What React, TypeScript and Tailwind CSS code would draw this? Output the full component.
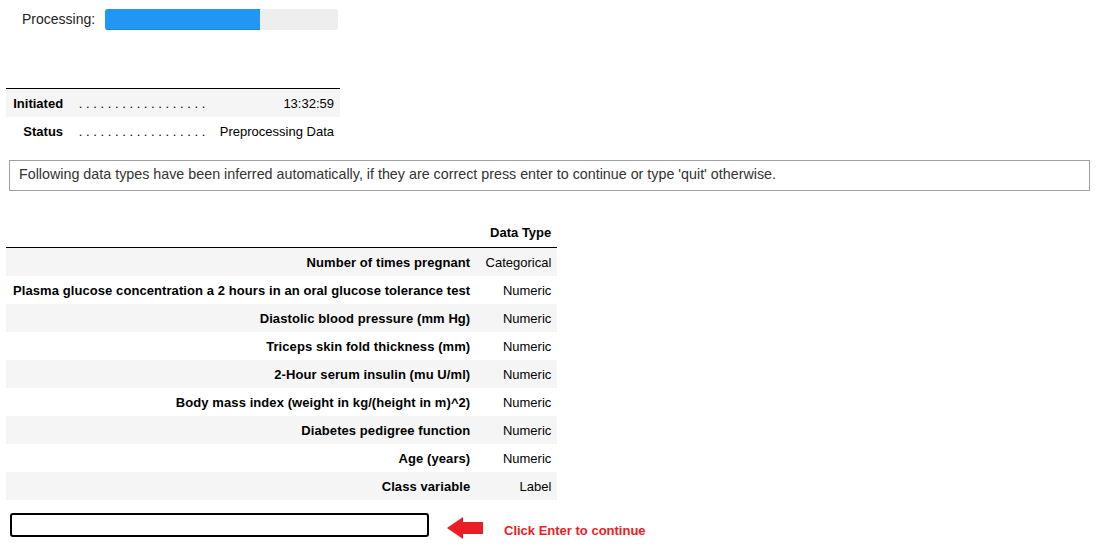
const rows: [string, string][] = [
  ["Number of times pregnant", "Categorical"],
  ["Plasma glucose concentration a 2 hours in an oral glucose tolerance test", "Numeric"],
  ["Diastolic blood pressure (mm Hg)", "Numeric"],
  ["Triceps skin fold thickness (mm)", "Numeric"],
  ["2-Hour serum insulin (mu U/ml)", "Numeric"],
  ["Body mass index (weight in kg/(height in m)^2)", "Numeric"],
  ["Diabetes pedigree function", "Numeric"],
  ["Age (years)", "Numeric"],
  ["Class variable", "Label"],
];

const dots = ". . . . . . . . . . . . . . . . . .";

export default function App() {
  return (
    <div className="min-h-screen bg-white text-black font-['Liberation_Sans',Arial,sans-serif]">
      {/* progress widget */}
      <div className="flex items-center h-[22px] mt-[8px] pl-[22px]">
        <span className="text-[14px] text-[#222] w-[83px]">Processing:</span>
        <div className="w-[233px] h-[21px] bg-[#eeeeee] rounded-[3px] overflow-hidden">
          <div className="h-full w-[155px] bg-[#2196f3] border-b border-[#1e88e5]" />
        </div>
      </div>

      {/* timing table */}
      <table className="ml-[6px] mt-[58px] w-[334px] border-collapse border-t border-black text-[13px]">
        <tbody>
          <tr className="bg-[#f5f5f5] h-[28px]">
            <th className="pl-[6px] pr-[7px] pt-[2px] text-right font-bold">Initiated</th>
            <td className="px-[6px] pt-[2px] text-right">{dots}</td>
            <td className="px-[6px] pt-[2px] text-right">13:32:59</td>
          </tr>
          <tr className="h-[28px]">
            <th className="pl-[6px] pr-[7px] pt-[2px] text-right font-bold">Status</th>
            <td className="px-[6px] pt-[2px] text-right">{dots}</td>
            <td className="px-[6px] pt-[2px] text-right">Preprocessing Data</td>
          </tr>
        </tbody>
      </table>

      {/* message */}
      <div className="ml-[9px] mr-[8px] mt-[15px] h-[31px] border border-[#a0a0a0] flex items-center px-[9px] text-[14.3px] text-[#333]">
        Following data types have been inferred automatically, if they are correct press enter to continue or type 'quit' otherwise.
      </div>

      {/* data types table */}
      <table className="ml-[6px] mt-[27px] border-collapse text-[13px]">
        <thead>
          <tr className="h-[30px] border-b border-black">
            <th className="px-[6px]" />
            <th className="w-[81px] px-[6px] text-right font-bold align-middle">Data Type</th>
          </tr>
        </thead>
        <tbody>
          {rows.map(([name, type], i) => (
            <tr key={name} className={i % 2 === 0 ? "bg-[#f5f5f5] h-[28px]" : "h-[28px]"}>
              <th className="pl-[7px] pr-[6px] pt-[2px] text-right font-bold tracking-[0.08px]">{name}</th>
              <td className="px-[6px] pt-[2px] text-right">{type}</td>
            </tr>
          ))}
        </tbody>
      </table>

      {/* input + hint */}
      <div className="flex items-start mt-[13px] ml-[10px]">
        <div className="w-[419px] h-[24px] border-2 border-black rounded-[3px]" />
        <svg width="36" height="24" viewBox="0 0 36 24" className="ml-[18px] mt-[3px]">
          <polygon points="0,12 16,1 16,6 36,6 36,18 16,18 16,23" fill="#ed1c24" />
        </svg>
        <span className="ml-[21px] mt-[8px] text-[13px] font-bold text-[#ed1c24]">Click Enter to continue</span>
      </div>
    </div>
  );
}
